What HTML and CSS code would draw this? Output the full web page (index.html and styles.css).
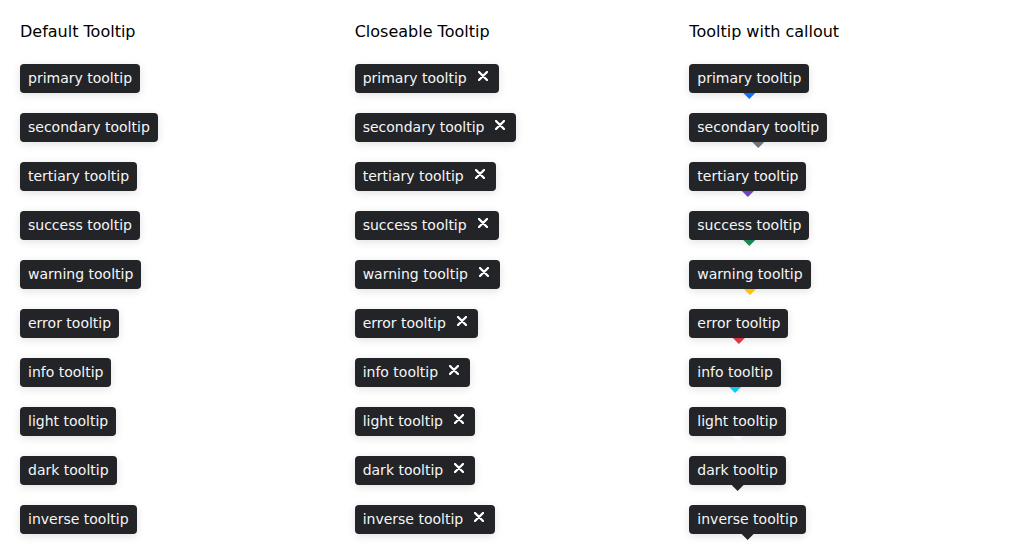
FILE: index.html
```html
<!DOCTYPE html>
<html lang="en">
<head>
<meta charset="utf-8">
<title>Tooltips</title>
<link rel="stylesheet" href="styles.css">
</head>
<body>
<div class="grid">
  <section class="col">
    <h2 class="title">Default Tooltip</h2>
    <div class="tip">primary tooltip</div>
    <div class="tip">secondary tooltip</div>
    <div class="tip">tertiary tooltip</div>
    <div class="tip">success tooltip</div>
    <div class="tip">warning tooltip</div>
    <div class="tip">error tooltip</div>
    <div class="tip">info tooltip</div>
    <div class="tip">light tooltip</div>
    <div class="tip">dark tooltip</div>
    <div class="tip">inverse tooltip</div>
  </section>
  <section class="col">
    <h2 class="title">Closeable Tooltip</h2>
    <div class="tip closeable">primary tooltip<svg class="x" viewBox="0 0 10 10"><path d="M1 1L9 9M9 1L1 9"/></svg></div>
    <div class="tip closeable">secondary tooltip<svg class="x" viewBox="0 0 10 10"><path d="M1 1L9 9M9 1L1 9"/></svg></div>
    <div class="tip closeable">tertiary tooltip<svg class="x" viewBox="0 0 10 10"><path d="M1 1L9 9M9 1L1 9"/></svg></div>
    <div class="tip closeable">success tooltip<svg class="x" viewBox="0 0 10 10"><path d="M1 1L9 9M9 1L1 9"/></svg></div>
    <div class="tip closeable">warning tooltip<svg class="x" viewBox="0 0 10 10"><path d="M1 1L9 9M9 1L1 9"/></svg></div>
    <div class="tip closeable">error tooltip<svg class="x" viewBox="0 0 10 10"><path d="M1 1L9 9M9 1L1 9"/></svg></div>
    <div class="tip closeable">info tooltip<svg class="x" viewBox="0 0 10 10"><path d="M1 1L9 9M9 1L1 9"/></svg></div>
    <div class="tip closeable">light tooltip<svg class="x" viewBox="0 0 10 10"><path d="M1 1L9 9M9 1L1 9"/></svg></div>
    <div class="tip closeable">dark tooltip<svg class="x" viewBox="0 0 10 10"><path d="M1 1L9 9M9 1L1 9"/></svg></div>
    <div class="tip closeable">inverse tooltip<svg class="x" viewBox="0 0 10 10"><path d="M1 1L9 9M9 1L1 9"/></svg></div>
  </section>
  <section class="col">
    <h2 class="title">Tooltip with callout</h2>
    <div class="tip callout c-primary">primary tooltip</div>
    <div class="tip callout c-secondary">secondary tooltip</div>
    <div class="tip callout c-tertiary">tertiary tooltip</div>
    <div class="tip callout c-success">success tooltip</div>
    <div class="tip callout c-warning">warning tooltip</div>
    <div class="tip callout c-error">error tooltip</div>
    <div class="tip callout c-info">info tooltip</div>
    <div class="tip callout c-light">light tooltip</div>
    <div class="tip callout c-dark">dark tooltip</div>
    <div class="tip callout c-inverse">inverse tooltip</div>
  </section>
</div>
</body>
</html>
```

FILE: styles.css
```css
* { box-sizing: border-box; }
html, body { margin: 0; padding: 0; background: #fff; }
body {
  font-family: "DejaVu Sans", "Liberation Sans", sans-serif;
  color: #000;
  padding: 20px 0 20px 20px;
}
.grid {
  display: grid;
  grid-template-columns: repeat(3, minmax(0, 1fr));
}
.col {
  display: flex;
  flex-direction: column;
  align-items: flex-start;
  gap: 20px;
}
.title {
  margin: 0;
  font-size: 16px;
  line-height: 24px;
  font-weight: normal;
}
.tip {
  position: relative;
  display: inline-flex;
  align-items: center;
  background: #222428;
  color: #f6f6f7;
  font-size: 14px;
  line-height: 17px;
  padding: 6px 8px;
  border-radius: 4px;
  box-shadow: 0 2px 8px rgba(0, 0, 0, 0.12);
}
.closeable {
  gap: 10px;
  padding-right: 12px;
}
.x {
  width: 10px;
  height: 10px;
  margin-top: -5px;
  margin-left: 1px;
  margin-right: -1px;
  fill: none;
  stroke: #fff;
  stroke-width: 2.3;
  stroke-linecap: round;
}
.callout::after {
  content: "";
  position: absolute;
  left: 50%;
  top: 100%;
  width: 12px;
  height: 6px;
  margin-left: -6px;
  background: var(--cc);
  clip-path: polygon(0 0, 100% 0, 50% 100%);
}
.c-primary { --cc: #0d6efd; }
.c-secondary { --cc: #6c757d; }
.c-tertiary { --cc: #6f42c1; }
.c-success { --cc: #198754; }
.c-warning { --cc: #ffc107; }
.c-error { --cc: #dc3545; }
.c-info { --cc: #0dcaf0; }
.c-light { --cc: #f8f9fa; }
.c-dark { --cc: #222428; }
.c-inverse { --cc: #222428; }
```
